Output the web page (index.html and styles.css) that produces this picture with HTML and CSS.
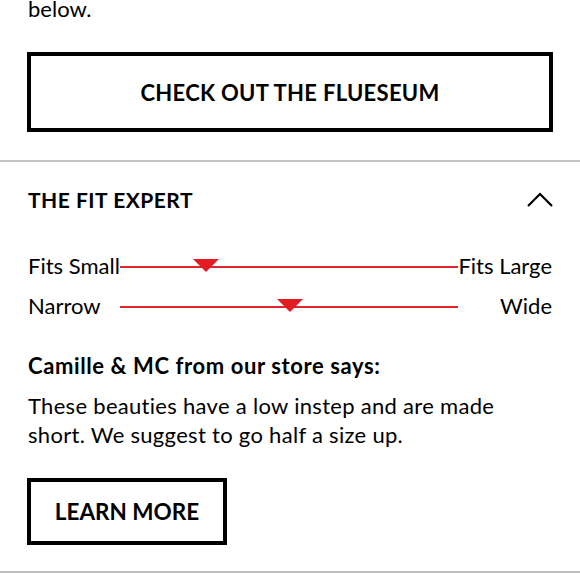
FILE: index.html
```html
<!DOCTYPE html>
<html>
<head>
<meta charset="utf-8">
<link rel="stylesheet" href="styles.css">
</head>
<body>
<div class="top">
  <p class="intro">below.</p>
  <a class="btn btn-wide">CHECK OUT THE FLUESEUM</a>
</div>
<section class="fit">
  <div class="fit-head">
    <h2>THE FIT EXPERT</h2>
    <svg class="chev" width="26" height="15" viewBox="0 0 26 15"><path d="M1 14 L13 2 L25 14" fill="none" stroke="#000" stroke-width="2.2"/></svg>
  </div>
  <div class="slider first">
    <span class="lbl">Fits Small</span>
    <div class="track"><span class="mark" style="left:25.4%"></span></div>
    <span class="lbl right">Fits Large</span>
  </div>
  <div class="slider">
    <span class="lbl">Narrow</span>
    <div class="track"><span class="mark" style="left:50.3%"></span></div>
    <span class="lbl right">Wide</span>
  </div>
  <h3>Camille &amp; MC from our store says:</h3>
  <p class="note">These beauties have a low instep and are made short. We suggest to go half a size up.</p>
  <a class="btn btn-small">LEARN MORE</a>
</section>
</body>
</html>
```
FILE: styles.css
```css
html, body {
  margin: 0;
  padding: 0;
  background: #fff;
}
body {
  font-family: Lato, "Open Sans", sans-serif;
  color: #000;
  width: 580px;
  height: 580px;
  overflow: hidden;
}
.top {
  padding: 0 27px 28px;
  border-bottom: 2px solid #c4c4c4;
}
.intro {
  margin: -6px 0 0 1px;
  font-size: 22px;
  line-height: 29px;
}
.btn {
  display: flex;
  align-items: center;
  justify-content: center;
  box-sizing: border-box;
  border: 4px solid #000;
  font-weight: 700;
  color: #000;
  text-decoration: none;
}
.btn-wide {
  margin-top: 29px;
  height: 80px;
  font-size: 22px;
  letter-spacing: 0.3px;
}
.fit {
  padding: 0 28px;
  border-bottom: 2px solid #bdbdbd;
  height: 411px;
  box-sizing: border-box;
}
.fit-head {
  display: flex;
  justify-content: space-between;
  align-items: center;
  height: 75px;
}
.fit-head h2 {
  margin: 0;
  font-size: 21px;
  font-weight: 700;
  letter-spacing: 0.5px;
}
.chev {
  margin-right: -1px;
}
.slider {
  display: grid;
  grid-template-columns: 92px 1fr 94px;
  align-items: center;
  height: 40px;
  font-size: 22px;
}
.slider.first {
  margin-top: 10px;
}
.lbl {
  white-space: nowrap;
  padding-bottom: 4px;
}
.lbl.right {
  text-align: right;
}
.track {
  position: relative;
  height: 2px;
  background: #e3262d;
}
.mark {
  position: absolute;
  top: -7px;
  width: 0;
  height: 0;
  margin-left: -13px;
  border-left: 13px solid transparent;
  border-right: 13px solid transparent;
  border-top: 13px solid #e31b23;
}
h3 {
  margin: 25px 0 0;
  font-size: 22px;
  font-weight: 700;
  line-height: 28px;
  letter-spacing: 0.6px;
}
.note {
  margin: 11px 0 0;
  font-size: 22px;
  line-height: 29px;
  letter-spacing: 0.3px;
  max-width: 490px;
}
.btn-small {
  margin-top: 29px;
  width: 200px;
  height: 67px;
  margin-left: -1px;
  font-size: 22.5px;
}
```
